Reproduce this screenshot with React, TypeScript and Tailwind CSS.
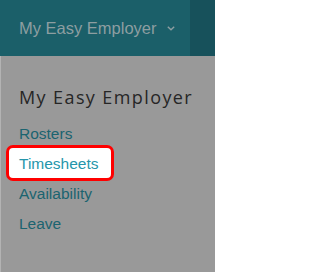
import React from "react";

export default function App() {
  return (
    <div className="w-[215px] h-[272px] flex flex-col bg-[#999999] overflow-hidden" style={{ fontFamily: '"Liberation Sans", Arial, sans-serif' }}>
      <div className="h-[56px] flex shrink-0">
        <div className="w-[190px] bg-[#1b5f69] flex items-center pl-[19px] text-[16.5px] text-[#8d9ea1]">
          <span>My Easy Employer</span>
          <svg className="ml-[10px] mt-[1px]" width="8" height="5" viewBox="0 0 8 5" fill="none">
            <path d="M0.8 0.8 L4 3.8 L7.2 0.8" stroke="#8d9ea1" strokeWidth="1.4" />
          </svg>
        </div>
        <div className="flex-1 bg-[#17515b]" />
      </div>
      <div className="flex-1 border-l border-[#b3b3b3] pl-[18px] pt-[29px]">
        <div className="text-[18px] leading-[24px] text-[#262626] tracking-[1.4px]" style={{ fontFamily: '"Open Sans", sans-serif' }}>
          My Easy Employer
        </div>
        <div className="mt-[10px] flex flex-col text-[15.5px] leading-[30px]">
          <div className="text-[#1b6470]">Rosters</div>
          <div className="relative text-[#2596ab]">
            <span className="absolute left-[-13px] top-[-4px] w-[108px] h-[36px] rounded-[7px] border-[3px] border-[#ff0000] bg-white" />
            <span className="relative">Timesheets</span>
          </div>
          <div className="text-[#1b6470]">Availability</div>
          <div className="text-[#1b6470]">Leave</div>
        </div>
      </div>
    </div>
  );
}
